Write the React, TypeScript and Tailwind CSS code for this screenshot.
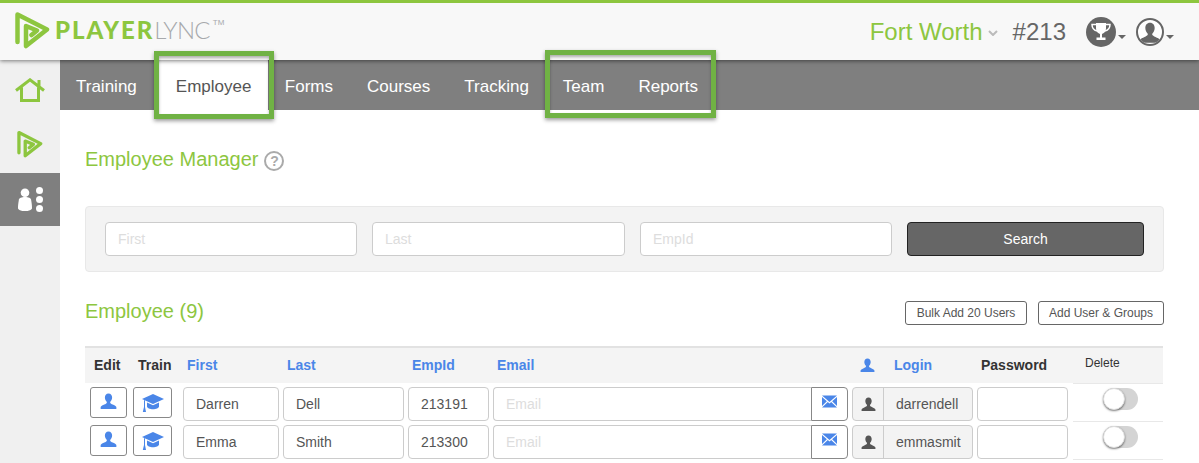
const font = "font-['Liberation_Sans',Arial,sans-serif]";

const tabs = ['Forms', 'Courses', 'Tracking'];

const employees = [
  { first: 'Darren', last: 'Dell', empId: '213191', login: 'darrendell' },
  { first: 'Emma', last: 'Smith', empId: '213300', login: 'emmasmit' },
];

function PlayMark({ className }: { className?: string }) {
  return (
    <svg viewBox="0 0 35 38" className={className} fill="none" stroke="#8dc63f" strokeWidth="4.500" strokeLinejoin="round" strokeLinecap="round">
      <path d="M2.500 31 V3.500 L32 18.500 L11 35 V15 L22 19.500 L16.500 24" />
    </svg>
  );
}

function UserGlyph({ className }: { className?: string }) {
  return (
    <svg viewBox="0 0 16 16" className={className} fill="currentColor">
      <path d="M8 0.5c2.2 0 3.4 1.7 3.4 3.8 0 1.6-.7 3-1.5 3.8-.3.3-.4.6-.3 1 .2.8 1.2 1.2 2.4 1.8 1.300.6 2.900 1.200 3.400 2.300v1.800H.6v-1.800c.5-1.100 2.100-1.700 3.400-2.300 1.200-.6 2.200-1 2.400-1.800.1-.4 0-.7-.3-1-.8-.8-1.500-2.200-1.500-3.800C4.600 2.200 5.800.5 8 .5z" />
    </svg>
  );
}

function GradCap() {
  return (
    <svg viewBox="0 0 22 18" className="w-[22px] h-[18px]" fill="#4a86e8">
      <path d="M11 0L22 5 11 10 0 5z" />
      <path d="M5 8.500v4c0 1.500 3 2.800 6 2.800s6-1.300 6-2.800v-4L11 11.300z" />
      <path d="M2 6l1 .5V13l1 5H.8l1.200-5z" />
    </svg>
  );
}

function Envelope() {
  return (
    <svg viewBox="0 0 16 13" className="w-[15px] h-[13px]" fill="#4a86e8">
      <path d="M0 0h16L8 7zM0 1.800v9.500L5.200 6.200zM16 1.800v9.500L10.800 6.200zM0 13l6.200-6 1.800 1.600L9.800 7 16 13z" />
    </svg>
  );
}

function Caret() {
  return <span className="ml-[2px] mt-[11px] w-0 h-0 border-x-[4px] border-x-transparent border-t-[4px] border-t-[#666]" />;
}

function TextCell({ value, placeholder, className }: { value?: string; placeholder?: string; className: string }) {
  return (
    <input
      readOnly
      value={value ?? ''}
      placeholder={placeholder}
      className={`h-[34px] border border-[#ccc] rounded-[4px] bg-white px-3 text-[14px] text-[#555] placeholder:text-[#ddd] outline-none ${className}`}
    />
  );
}

export default function App() {
  return (
    <div className={`${font} h-[463px] w-[1199px] overflow-hidden bg-white relative`}>
      {/* HEADER */}
      <header className="relative z-10 h-[60px] border-t-[3px] border-[#8dc63f] bg-[#f8f8f8] shadow-[0_1px_4px_rgba(0,0,0,0.5)] flex items-center">
        <div className="flex items-center pl-[15px] pb-[3px]">
          <PlayMark className="w-[35px] h-[38px]" />
          <span className="ml-[5px] font-['Lato',sans-serif] text-[24px] leading-none font-black tracking-[1.900px] text-[#8dc63f]">PLAYER</span>
          <span className="font-['Lato',sans-serif] text-[24px] leading-none font-light tracking-[-0.700px] text-[#a7a9ac]">LYNC</span>
          <span className="ml-[3px] mb-[15px] text-[8px] leading-none text-[#a7a9ac]">TM</span>
        </div>
        <div className="ml-auto flex items-center pr-[25px]">
          <span className="text-[24px] text-[#8dc63f]">Fort Worth</span>
          <svg viewBox="0 0 10 6" className="ml-[5px] mt-[3px] w-[10px] h-[6px]" fill="none" stroke="#bbb" strokeWidth="2">
            <path d="M1 1l4 4 4-4" />
          </svg>
          <span className="ml-[15px] text-[24px] text-[#666]">#213</span>
          <span className="ml-[20px] w-[30px] h-[30px] rounded-full bg-[#666] flex items-center justify-center">
            <svg viewBox="0 0 22 19" className="w-[22px] h-[19px]">
              <path d="M6 1h10v5.500c0 3-2.200 5-4 5.500v3.500h3.500V18h-9v-2.500H10V12C8.200 11.500 6 9.500 6 6.500z" fill="white" />
              <path d="M6 2.500H2c0 3.500 1.500 5.500 5 6.500M16 2.500h4c0 3.500-1.500 5.500-5 6.500" fill="none" stroke="white" strokeWidth="1.500" />
            </svg>
          </span>
          <Caret />
          <span className="ml-[10px] w-[28px] h-[28px] rounded-full border-[2px] border-[#666] bg-white overflow-hidden flex items-end justify-center text-[#666]">
            <UserGlyph className="w-[22px] h-[22px]" />
          </span>
          <Caret />
        </div>
      </header>

      <div className="flex h-[403px]">
        {/* SIDEBAR */}
        <aside className="w-[60px] shrink-0 bg-[#f0f0f0] flex flex-col">
          <div className="h-[42px] flex items-end justify-center">
            <svg viewBox="0 0 30 24" className="w-[30px] h-[24px]" fill="none" stroke="#8dc63f" strokeWidth="3">
              <path d="M1 12.500 L15 1.800 L29 12.500 M24 8 V2 M6.500 9.500 V22.500 H23.500 V9.500" />
            </svg>
          </div>
          <div className="h-[71px] flex items-center justify-center pt-[13px]">
            <PlayMark className="w-[26px] h-[28px]" />
          </div>
          <div className="h-[53px] bg-[#7f7f7f] flex items-center justify-center gap-[3px]">
            <svg viewBox="0 0 15 24" className="w-[16px] h-[23px]" fill="white">
              <circle cx="7.500" cy="5" r="4.500" />
              <path d="M1 13c0-2.500 3-3.500 6.500-3.500S14 10.500 14 13c.6 3 .8 6 .8 8 0 1.500-3 3-7.300 3S.2 22.500.2 21c0-2 .2-5 .8-8z" />
            </svg>
            <span className="flex flex-col gap-[2px]">
              <span className="w-[7px] h-[7px] rounded-full bg-white" />
              <span className="w-[7px] h-[7px] rounded-full bg-white" />
              <span className="w-[7px] h-[7px] rounded-full bg-white" />
            </span>
          </div>
        </aside>

        <div className="flex-1 min-w-0">
          {/* NAV */}
          <nav className="h-[50px] bg-[#7f7f7f] flex text-[17px] text-white">
            <a className="px-4 leading-[53px]">Training</a>
            <a className="ml-[6px] px-[17px] leading-[53px] bg-white text-[#555] w-[109px]">Employee</a>
            {tabs.map((t) => (
              <a key={t} className="px-[17px] leading-[53px]">{t}</a>
            ))}
            <a className="px-[17px] leading-[53px]">Team</a>
            <a className="px-[17px] leading-[53px]">Reports</a>
          </nav>

          <main className="pl-[25px] pr-[35px]">
            <div className="h-[96px] flex items-start pt-[36px]">
              <h1 className="text-[20px] leading-[26px] text-[#8dc63f]">Employee Manager</h1>
              <span className="ml-[6px] mt-[5px] w-[20px] h-[20px] rounded-full border-[2px] border-[#aaa] text-[#aaa] text-[14px] leading-[16px] font-bold text-center">?</span>
            </div>

            {/* SEARCH */}
            <section className="h-[66px] border border-[#e8e8e8] bg-[#f3f3f3] rounded-[4px] flex items-center pl-[19px] pr-[19px]">
              <TextCell placeholder="First" className="w-[252px]" />
              <TextCell placeholder="Last" className="ml-[15px] w-[253px]" />
              <TextCell placeholder="EmpId" className="ml-[15px] w-[252px]" />
              <button className="ml-[15px] w-[237px] h-[34px] bg-[#666] border border-[#222] rounded-[4px] text-[14px] text-white">Search</button>
            </section>

            <div className="mt-[29px] h-[24px] flex items-center">
              <h2 className="-mt-[5px] text-[20px] text-[#8dc63f]">Employee (9)</h2>
              <button className="ml-auto w-[122px] h-[24px] border border-[#666] rounded-[3px] text-[12px] text-[#555]">Bulk Add 20 Users</button>
              <button className="ml-[11px] w-[126px] h-[24px] border border-[#666] rounded-[3px] text-[12px] text-[#555]">Add User &amp; Groups</button>
            </div>

            {/* TABLE */}
            <div className="mt-[21px] w-[1078px] text-[14px]">
              <div className="h-[37px] border-t-2 border-[#e2e2e2] bg-[#f4f4f4] flex items-center font-bold text-[#4a86e8]">
                <span className="ml-[9px] w-[44px] text-[#333]">Edit</span>
                <span className="w-[49px] text-[#333]">Train</span>
                <span className="w-[100px]">First</span>
                <span className="w-[125px]">Last</span>
                <span className="w-[85px]">EmpId</span>
                <span className="w-[363px]">Email</span>
                <UserGlyph className="w-[15px] h-[15px]" />
                <span className="ml-[19px] w-[87px]">Login</span>
                <span className="w-[104px] text-[#333]">Password</span>
                <span className="mb-[5px] text-[12px] font-normal text-[#333]">Delete</span>
              </div>
              {employees.map((e) => (
                <div key={e.empId} className="h-[38px] flex items-start pt-[4px] pl-[5px]">
                  <button className="w-[37px] h-[31px] border border-[#888] rounded-[3px] flex items-center justify-center text-[#4a86e8]">
                    <UserGlyph className="w-[17px] h-[17px] mb-[3px]" />
                  </button>
                  <button className="ml-[6px] w-[39px] h-[31px] border border-[#888] rounded-[3px] flex items-center justify-center">
                    <GradCap />
                  </button>
                  <TextCell value={e.first} className="ml-[11px] w-[96px]" />
                  <TextCell value={e.last} className="ml-[4px] w-[121px]" />
                  <TextCell value={e.empId} className="ml-[4px] w-[81px]" />
                  <div className="ml-[4px] w-[355px] h-[34px] flex">
                    <TextCell placeholder="Email" className="flex-1 min-w-0 rounded-r-none border-r-0" />
                    <span className="w-[37px] border border-[#888] rounded-r-[4px] flex items-center justify-center pb-[5px]">
                      <Envelope />
                    </span>
                  </div>
                  <div className="ml-[4px] w-[121px] h-[34px] flex border border-[#ccc] rounded-[4px] bg-[#f3f3f3] text-[#555]">
                    <span className="w-[31px] border-r border-[#ccc] flex items-center justify-center">
                      <UserGlyph className="w-[15px] h-[15px]" />
                    </span>
                    <span className="pl-[12px] leading-[32px] overflow-hidden">{e.login}</span>
                  </div>
                  <TextCell className="ml-[4px] w-[91px]" />
                  <div className="ml-[5px] w-[90px] self-stretch -mt-[4px] border-t border-[#e8e8e8] pl-[30px] pt-[4px]">
                    <span className="relative block w-[35px] h-[22px] rounded-full bg-[#d4d4d4]">
                      <span className="absolute left-0 top-0 w-[22px] h-[22px] rounded-full bg-white border border-[#ddd] shadow-[0_1px_2px_rgba(0,0,0,0.5)]" />
                    </span>
                  </div>
                </div>
              ))}
              <div className="ml-[988px] w-[90px] border-t border-[#e8e8e8]" />
            </div>
          </main>
        </div>
      </div>

      {/* HIGHLIGHT BOXES */}
      <div className="absolute z-20 left-[154px] top-[51px] w-[120px] h-[68px] border-[5px] border-[#70b244] shadow-[0_2px_4px_rgba(0,0,0,0.4),inset_0_2px_3px_rgba(0,0,0,0.3)]" />
      <div className="absolute z-20 left-[545px] top-[50px] w-[171px] h-[68px] border-[5px] border-[#70b244] shadow-[0_2px_4px_rgba(0,0,0,0.4),inset_0_2px_3px_rgba(0,0,0,0.3)]" />
    </div>
  );
}
